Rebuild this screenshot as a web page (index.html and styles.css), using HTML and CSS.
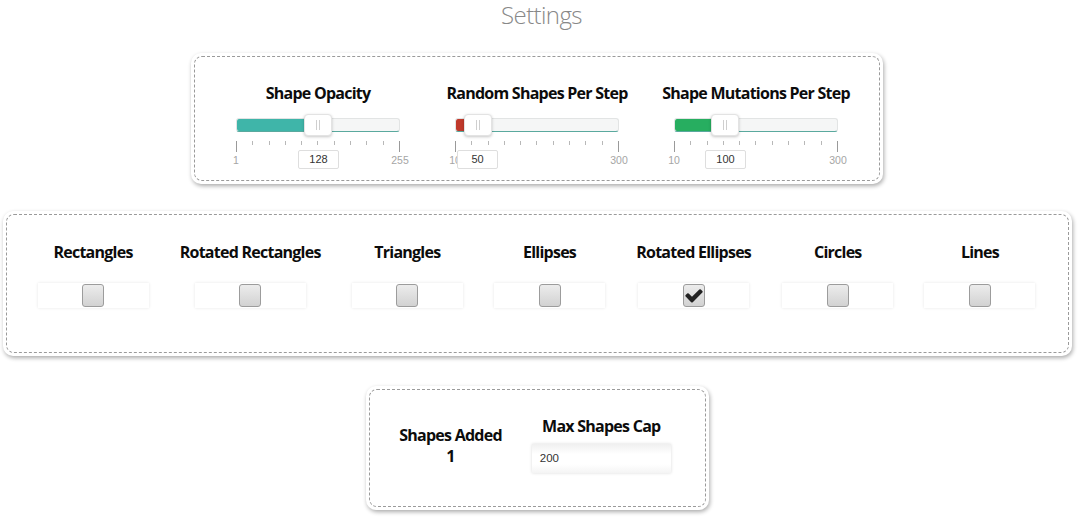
FILE: index.html
```html
<!DOCTYPE html>
<html>
<head>
<meta charset="utf-8">
<link rel="stylesheet" href="styles.css">
</head>
<body>
<div class="page">
  <h1 class="title">Settings</h1>

  <div class="panel p1">
    <div class="dash sliders">
      <div class="scol">
        <div class="head">Shape Opacity</div>
        <div class="slider">
          <div class="track"><div class="fill teal" style="width:82px"></div></div>
          <div class="handle" style="left:68px"><i></i><i></i></div>
          <div class="ticks"><b></b><s></s><s></s><s></s><s></s><s></s><s></s><s></s><s></s><s></s><b></b></div>
          <div class="labels"><span>1</span><span>255</span></div>
          <div class="value" style="left:62px">128</div>
        </div>
      </div>
      <div class="scol">
        <div class="head">Random Shapes Per Step</div>
        <div class="slider">
          <div class="track"><div class="fill red" style="width:23px"></div></div>
          <div class="handle" style="left:9px"><i></i><i></i></div>
          <div class="ticks"><b></b><s></s><s></s><s></s><s></s><s></s><s></s><s></s><s></s><s></s><b></b></div>
          <div class="labels"><span>10</span><span>300</span></div>
          <div class="value" style="left:2px">50</div>
        </div>
      </div>
      <div class="scol">
        <div class="head">Shape Mutations Per Step</div>
        <div class="slider">
          <div class="track"><div class="fill green" style="width:51px"></div></div>
          <div class="handle" style="left:37px"><i></i><i></i></div>
          <div class="ticks"><b></b><s></s><s></s><s></s><s></s><s></s><s></s><s></s><s></s><s></s><b></b></div>
          <div class="labels"><span>10</span><span>300</span></div>
          <div class="value" style="left:31px">100</div>
        </div>
      </div>
    </div>
  </div>

  <div class="panel p2">
    <div class="dash shapes">
      <div class="ccol"><div class="head">Rectangles</div><div class="cwrap"><span class="cb"></span></div></div>
      <div class="ccol"><div class="head">Rotated Rectangles</div><div class="cwrap"><span class="cb"></span></div></div>
      <div class="ccol"><div class="head">Triangles</div><div class="cwrap"><span class="cb"></span></div></div>
      <div class="ccol"><div class="head">Ellipses</div><div class="cwrap"><span class="cb"></span></div></div>
      <div class="ccol"><div class="head">Rotated Ellipses</div><div class="cwrap"><span class="cb checked"><svg viewBox="0 0 1792 1792" width="21" height="21"><path d="M1671 566q0 40-28 68l-724 724-136 136q-28 28-68 28t-68-28l-136-136-362-362q-28-28-28-68t28-68l136-136q28-28 68-28t68 28l294 295 656-657q28-28 68-28t68 28l136 136q28 28 28 68z" fill="#222"/></svg></span></div></div>
      <div class="ccol"><div class="head">Circles</div><div class="cwrap"><span class="cb"></span></div></div>
      <div class="ccol"><div class="head">Lines</div><div class="cwrap"><span class="cb"></span></div></div>
    </div>
  </div>

  <div class="panel p3">
    <div class="dash counts">
      <div class="added head">Shapes Added<br>1</div>
      <div class="capcol">
        <div class="head">Max Shapes Cap</div>
        <div class="input">200</div>
      </div>
    </div>
  </div>
</div>
</body>
</html>
```

FILE: styles.css
```css
* { box-sizing: border-box; }
html, body { margin: 0; padding: 0; background: #fff; }
body { font-family: "Open Sans", "Noto Sans", sans-serif; color: #111; }

.page { width: 1074px; padding-bottom: 8px; }

.title {
  margin: 0;
  height: 53px;
  padding-left: 9px;
  padding-top: 0;
  text-align: center;
  font-size: 24px;
  line-height: 30px;
  font-weight: 300;
  letter-spacing: -0.6px;
  color: #888;
}

.panel {
  margin: 0 auto;
  background: #fff;
  border-radius: 10px;
  box-shadow: 1px 2px 4px rgba(0,0,0,0.33);
  padding: 3px;
}
.dash {
  height: 100%;
  border: 1px dashed #9a9a9a;
  border-radius: 8px;
}

.head {
  font-size: 16px;
  font-weight: 700;
  letter-spacing: -0.75px;
  line-height: 22px;
  color: #0c0c0c;
  white-space: nowrap;
  text-align: center;
}

/* panel 1 */
.p1 { width: 692px; height: 131px; }
.sliders { display: flex; justify-content: center; gap: 55px; padding-top: 25px; }
.scol { width: 164px; display: flex; flex-direction: column; align-items: center; }
.slider { position: relative; width: 164px; height: 58px; margin-top: 8px; }
.track {
  position: relative;
  margin-top: 6px;
  height: 14px;
  background: #f5f6f6;
  border: 1px solid #e2e4e4;
  border-bottom: 1px solid #5aa99e;
  border-radius: 3px;
  overflow: hidden;
}
.fill { position: absolute; left: 0; top: -1px; bottom: -1px; border-radius: 3px 0 0 3px; }
.teal { background: #3fb5a9; }
.red { background: #c0392b; }
.green { background: #27ae60; }
.handle {
  position: absolute;
  top: 2px;
  width: 28px;
  height: 22px;
  background: #fff;
  border: 1px solid #e3e3e3;
  border-radius: 4px;
  box-shadow: 0 1px 3px rgba(0,0,0,0.22);
  display: flex;
  justify-content: center;
  align-items: center;
  gap: 2px;
}
.handle i { display: block; width: 1px; height: 10px; background: #cfcfcf; }
.ticks { display: flex; justify-content: space-between; align-items: flex-start; margin-top: 9px; height: 11px; }
.ticks b { display: block; width: 1px; height: 11px; background: #9a9a9a; }
.ticks s { display: block; width: 1px; height: 4px; background: #b8b8b8; }
.labels {
  display: flex;
  justify-content: space-between;
  margin: 2px -10px 0;
  font-family: "Liberation Sans", Arial, sans-serif;
  font-size: 10.5px;
  line-height: 12px;
  color: #a5a5a5;
}
.labels span { width: 20px; text-align: center; }
.value {
  position: absolute;
  top: 38px;
  width: 41px;
  height: 19px;
  background: #fff;
  border: 1px solid #dedede;
  border-radius: 2px;
  font-family: "Liberation Sans", Arial, sans-serif;
  font-size: 11px;
  line-height: 17px;
  text-align: center;
  color: #333;
}

/* panel 2 */
.p2 { width: 1069px; height: 145px; margin-top: 27px; }
.shapes { display: flex; justify-content: space-between; padding: 26px 32px 0 31px; }
.ccol { display: flex; flex-direction: column; align-items: center; min-width: 111px; }
.cwrap {
  margin-top: 20px;
  width: 111px;
  height: 25px;
  background: #fff;
  box-shadow: 0 0 3px rgba(0,0,0,0.1);
  display: flex;
  justify-content: center;
  align-items: center;
}
.cb {
  display: flex;
  justify-content: center;
  align-items: center;
  width: 22px;
  height: 23px;
  border: 1px solid #9c9c9c;
  border-radius: 3px;
  background: linear-gradient(#ececec, #d2d2d2);
}

/* panel 3 */
.p3 { width: 343px; height: 124px; margin-top: 30px; }
.counts { display: flex; justify-content: center; align-items: center; gap: 30px; padding-right: 4px; padding-bottom: 9px; }
.added { line-height: 21px; padding-top: 4px; }
.capcol { display: flex; flex-direction: column; align-items: center; }
.input {
  margin-top: 7px;
  width: 139px;
  height: 29px;
  padding-left: 8px;
  background: linear-gradient(#f0f0f0, #fff 35%, #fff 70%, #f4f4f4);
  box-shadow: 0 0 3px rgba(0,0,0,0.15);
  font-family: "Liberation Sans", Arial, sans-serif;
  font-size: 11.5px;
  line-height: 29px;
  color: #333;
}
```
